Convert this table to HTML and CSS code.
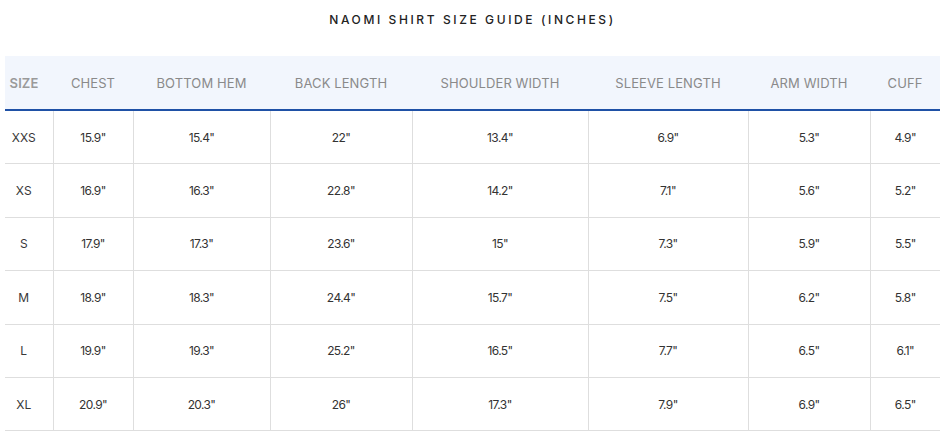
FILE: index.html
```html
<!DOCTYPE html>
<html>
<head>
<meta charset="utf-8">
<link rel="stylesheet" href="styles.css">
</head>
<body>
<div class="page">
  <h1 class="title">NAOMI SHIRT SIZE GUIDE (INCHES)</h1>
  <table class="guide">
    <colgroup>
      <col class="c-size"><col class="c-chest"><col class="c-hem"><col class="c-back"><col class="c-shoulder"><col class="c-sleeve"><col class="c-arm"><col class="c-cuff">
    </colgroup>
    <thead>
      <tr>
        <th class="first">SIZE</th><th>CHEST</th><th>BOTTOM HEM</th><th>BACK LENGTH</th><th>SHOULDER WIDTH</th><th>SLEEVE LENGTH</th><th>ARM WIDTH</th><th>CUFF</th>
      </tr>
    </thead>
    <tbody>
      <tr><td class="first">XXS</td><td>15.9"</td><td>15.4"</td><td>22"</td><td>13.4"</td><td>6.9"</td><td>5.3"</td><td>4.9"</td></tr>
      <tr><td class="first">XS</td><td>16.9"</td><td>16.3"</td><td>22.8"</td><td>14.2"</td><td>7.1"</td><td>5.6"</td><td>5.2"</td></tr>
      <tr><td class="first">S</td><td>17.9"</td><td>17.3"</td><td>23.6"</td><td>15"</td><td>7.3"</td><td>5.9"</td><td>5.5"</td></tr>
      <tr><td class="first">M</td><td>18.9"</td><td>18.3"</td><td>24.4"</td><td>15.7"</td><td>7.5"</td><td>6.2"</td><td>5.8"</td></tr>
      <tr><td class="first">L</td><td>19.9"</td><td>19.3"</td><td>25.2"</td><td>16.5"</td><td>7.7"</td><td>6.5"</td><td>6.1"</td></tr>
      <tr><td class="first">XL</td><td>20.9"</td><td>20.3"</td><td>26"</td><td>17.3"</td><td>7.9"</td><td>6.9"</td><td>6.5"</td></tr>
    </tbody>
  </table>
</div>
</body>
</html>
```
FILE: styles.css
```css
html, body {
  margin: 0;
  padding: 0;
  background: #ffffff;
}
body {
  font-family: Inter, "Liberation Sans", sans-serif;
}
.page {
  padding: 12px 0 0 5px;
}
.title {
  margin: 0 0 29px 0;
  width: 935px;
  text-align: center;
  font-size: 12px;
  font-weight: 500;
  letter-spacing: 2.6px;
  color: #222222;
  line-height: 15px;
}
.guide {
  border-collapse: collapse;
  table-layout: fixed;
  width: 935px;
}
.c-size { width: 48px; }
.c-chest { width: 80px; }
.c-hem { width: 137px; }
.c-back { width: 142px; }
.c-shoulder { width: 176px; }
.c-sleeve { width: 160px; }
.c-arm { width: 122px; }
.c-cuff { width: 70px; }
.guide thead tr {
  background: #f2f6fd;
  border-bottom: 2px solid #1f51a6;
}
.guide th {
  height: 53px;
  padding: 0;
  font-size: 13px;
  font-weight: 400;
  color: #8a8a8a;
  text-align: center;
  letter-spacing: 0.1px;
}
.guide th.first {
  font-weight: 600;
  color: #9a9a9a;
  padding-right: 10px;
}
.guide td {
  height: 52.4px;
  padding: 0;
  font-size: 12px;
  color: #333333;
  text-align: center;
  letter-spacing: -0.6px;
  border-left: 1px solid #dedede;
  border-bottom: 1px solid #dedede;
}
.guide td.first {
  border-left: none;
  padding-right: 10px;
  letter-spacing: 0;
  color: #383838;
}
```
